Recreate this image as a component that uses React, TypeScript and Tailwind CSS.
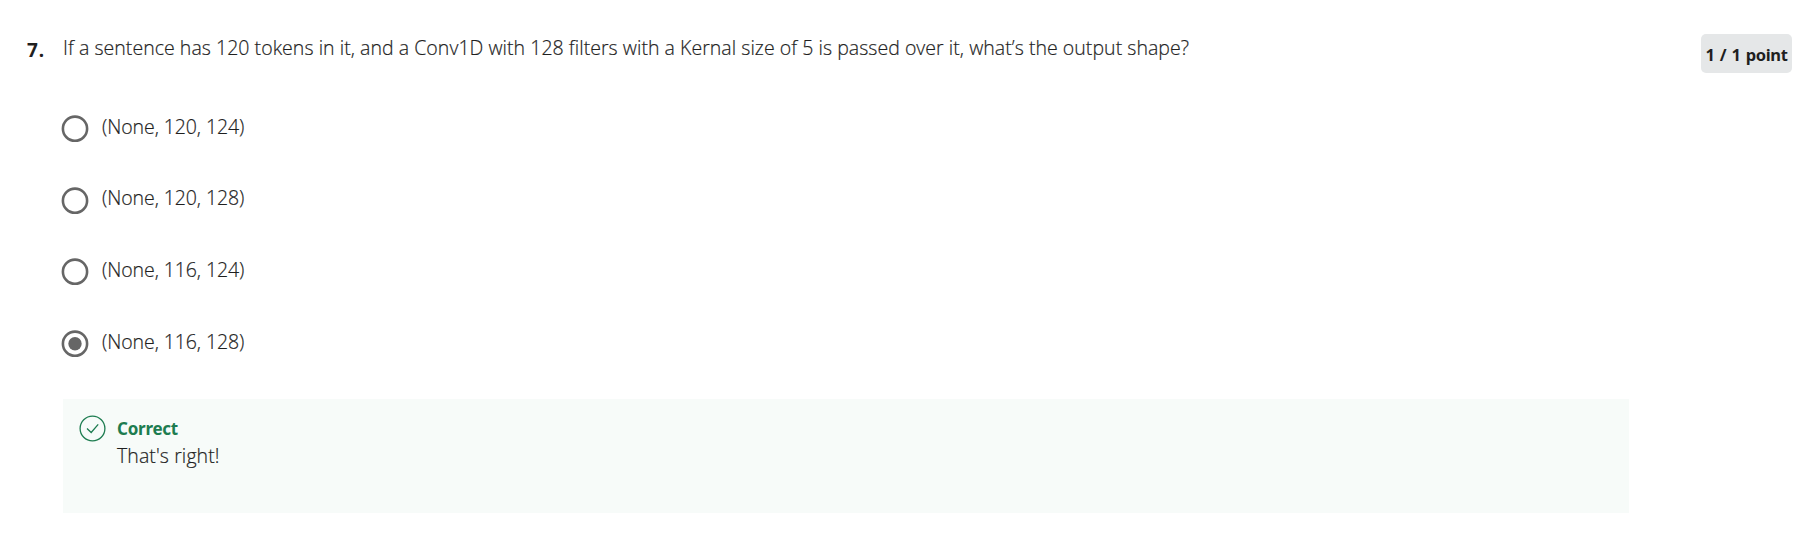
const options = ['(None, 120, 124)', '(None, 120, 128)', '(None, 116, 124)', '(None, 116, 128)'];

function Radio({ checked }: { checked: boolean }) {
  return (
    <svg className="mt-[3px] h-[28px] w-[28px] shrink-0" viewBox="0 0 28 28" fill="none">
      <circle cx="14" cy="13.7" r="12.1" stroke="#666666" strokeWidth="2.6" />
      {checked && <circle cx="14" cy="13.7" r="6.7" fill="#666666" />}
    </svg>
  );
}

export default function App() {
  return (
    <main className="flex h-[543px] w-full items-start bg-white font-['Open_Sans',sans-serif] text-[19.5px] font-light leading-[28px] text-[#1f1f1f]">
      <div className="w-[61px] shrink-0 pl-[27px] pt-[36px] font-['Noto_Sans',sans-serif] text-[19px] font-bold tracking-[0.8px]">7.</div>
      <section className="w-[1568px] shrink-0 pt-[34px]">
        <p className="whitespace-nowrap pl-[2px] tracking-[0.038px] [-webkit-text-stroke:0.2px_#1f1f1f]">
          If a sentence has 120 tokens in it, and a Conv1D with 128 filters with a Kernal size of 5 is passed over it, what’s the output shape?
        </p>
        <div className="mt-[50px] flex h-[287px] flex-col">
          {options.map((text, i) => (
            <label key={text} className="flex h-[71.7px] shrink-0 items-start gap-[13px]">
              <Radio checked={i === 3} />
              <span className="pt-[0.6px] tracking-[-0.08px] [-webkit-text-stroke:0.2px_#1f1f1f]">{text}</span>
            </label>
          ))}
        </div>
        <div className="ml-[2px] flex h-[114px] gap-[11px] bg-[#f7fbf9] pl-[16px] pt-[16px]">
          <svg className="h-[27px] w-[27px] shrink-0" viewBox="0 0 27 27" fill="none" stroke="#1d7c50" strokeWidth="1.3">
            <circle cx="13.5" cy="13.5" r="12.4" />
            <path d="M8 13.5l4.2 4 7-8.2" />
          </svg>
          <div>
            <div className="font-['Noto_Sans',sans-serif] text-[17px] font-bold tracking-[-0.25px] text-[#1d7c50]">Correct</div>
            <div className="mt-[-1px] tracking-[0.1px] [-webkit-text-stroke:0.2px_#1f1f1f]">That's right!</div>
          </div>
        </div>
      </section>
      <div className="ml-auto mr-[2px] mt-[34px] flex h-[39px] w-[91px] items-center justify-center rounded-[5px] bg-[#e5e7e8] pt-[2px] font-['Noto_Sans',sans-serif] text-[16.5px] font-bold tracking-[-0.35px] [word-spacing:1.2px]">1 / 1 point</div>
    </main>
  );
}
